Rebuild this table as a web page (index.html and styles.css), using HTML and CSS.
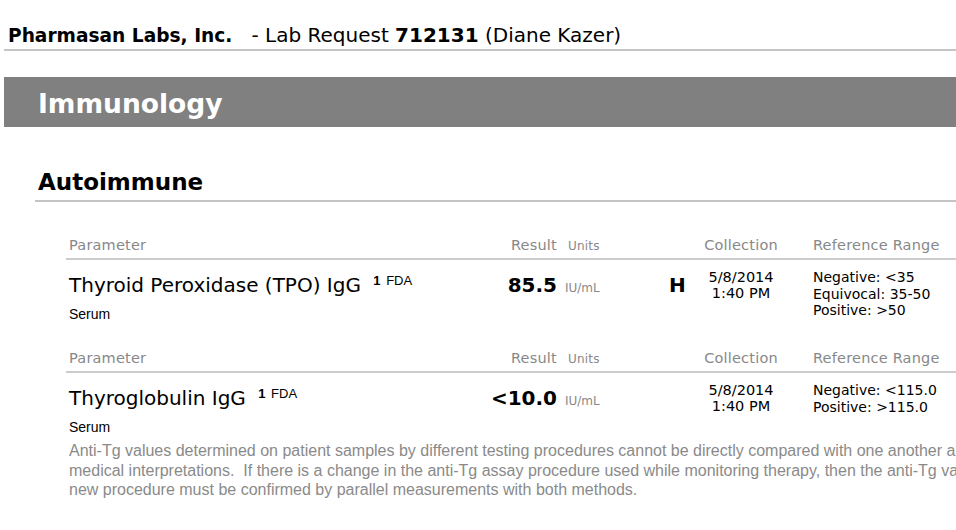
FILE: index.html
```html
<!DOCTYPE html>
<html lang="en">
<head>
<meta charset="utf-8">
<title>Lab Request 712131</title>
<link rel="stylesheet" href="styles.css">
</head>
<body>
<div class="page">
  <header class="top">
    <b class="lab">Pharmasan Labs, Inc.</b>&nbsp;&nbsp; - Lab Request <b>712131</b> (Diane Kazer)
  </header>

  <h1 class="section">Immunology</h1>

  <h2 class="group">Autoimmune</h2>

  <div class="test">
    <div class="cell hd c-param">Parameter</div>
    <div class="cell hd c-result">Result</div>
    <div class="cell hd c-units">Units</div>
    <div class="cell hd c-flag"></div>
    <div class="cell hd c-coll">Collection</div>
    <div class="cell hd c-ref">Reference Range</div>

    <div class="cell c-param">
      <div class="name">Thyroid Peroxidase (TPO) IgG <sup class="mark"><b>1</b> FDA</sup></div>
      <div class="specimen">Serum</div>
    </div>
    <div class="cell c-result val">85.5</div>
    <div class="cell c-units unit">IU/mL</div>
    <div class="cell c-flag flag">H</div>
    <div class="cell c-coll date">5/8/2014<br>1:40 PM</div>
    <div class="cell c-ref range">Negative: &lt;35<br>Equivocal: 35-50<br>Positive: &gt;50</div>
  </div>

  <div class="test">
    <div class="cell hd c-param">Parameter</div>
    <div class="cell hd c-result">Result</div>
    <div class="cell hd c-units">Units</div>
    <div class="cell hd c-flag"></div>
    <div class="cell hd c-coll">Collection</div>
    <div class="cell hd c-ref">Reference Range</div>

    <div class="cell c-param">
      <div class="name">Thyroglobulin IgG <sup class="mark"><b>1</b> FDA</sup></div>
      <div class="specimen">Serum</div>
    </div>
    <div class="cell c-result val">&lt;10.0</div>
    <div class="cell c-units unit">IU/mL</div>
    <div class="cell c-flag flag"></div>
    <div class="cell c-coll date">5/8/2014<br>1:40 PM</div>
    <div class="cell c-ref range">Negative: &lt;115.0<br>Positive: &gt;115.0</div>

    <p class="note">Anti-Tg values determined on patient samples by different testing procedures cannot be directly compared with one another and could be the cause of erroneous<br>medical interpretations.&nbsp; If there is a change in the anti-Tg assay procedure used while monitoring therapy, then the anti-Tg values obtained upon changing over to the<br>new procedure must be confirmed by parallel measurements with both methods.</p>
  </div>
</div>
</body>
</html>
```

FILE: styles.css
```css
html, body {
  margin: 0;
  padding: 0;
  overflow: hidden;
  background: #fff;
}

body {
  font-family: "DejaVu Sans", Verdana, sans-serif;
  color: #000;
}

.page {
  width: 1200px;
}

.top {
  margin: 0 0 0 4px;
  padding: 24px 0 3px 4px;
  height: 22px;
  font-size: 20px;
  line-height: 22px;
  border-bottom: 2px solid #c4c4c4;
  white-space: nowrap;
}

.top .lab {
  font-size: 18.6px;
}

.section {
  margin: 26px 0 0 4px;
  padding: 4px 0 0 34px;
  height: 46px;
  line-height: 46px;
  background: #808080;
  color: #fff;
  font-size: 26.5px;
  font-weight: bold;
}

.group {
  margin: 41px 0 0 35px;
  padding: 0 0 4px 3px;
  font-size: 23px;
  line-height: 28px;
  font-weight: bold;
  border-bottom: 2px solid #c4c4c4;
}

.test {
  margin-left: 66px;
  margin-top: 33px;
  display: grid;
  grid-template-columns: 414px 80px 100px 40px 82px 1fr;
  align-items: start;
}

.test + .test {
  margin-top: 26px;
}

.cell.hd {
  color: #888;
  font-size: 14.5px;
  line-height: 20px;
  padding-bottom: 3px;
  border-bottom: 2px solid #cccccc;
  margin-bottom: 9px;
  align-self: stretch;
  letter-spacing: 0.2px;
}

.c-param { padding-left: 3px; }
.c-result { text-align: right; padding-right: 3px; }
.c-units { padding-left: 5px; }
.c-flag { padding-left: 9px; }
.c-coll { text-align: center; }
.c-ref { padding-left: 31px; white-space: nowrap; }

.cell.hd.c-units {
  font-size: 12px;
  padding-left: 8px;
  padding-top: 2px;
  line-height: 18px;
}

.name {
  padding-top: 4px;
  font-size: 20px;
  line-height: 24px;
  white-space: nowrap;
}

.mark {
  font-family: "Liberation Sans", Arial, sans-serif;
  font-size: 13px;
  line-height: 0;
  vertical-align: 7px;
  margin-left: 6px;
}

.mark b {
  font-size: 13px;
  margin-right: 2px;
}

.specimen {
  margin-top: 9px;
  font-family: "Liberation Sans", Arial, sans-serif;
  font-size: 14px;
  line-height: 16px;
}

.val {
  padding-top: 4px;
  font-size: 20px;
  line-height: 24px;
  font-weight: bold;
}

.unit {
  padding-top: 10px;
  font-size: 12px;
  line-height: 18px;
  color: #888;
}

.flag {
  padding-top: 4px;
  font-size: 20px;
  line-height: 24px;
  font-weight: bold;
}

.date {
  font-size: 14.5px;
  line-height: 16px;
}

.range {
  font-size: 14px;
  line-height: 16.5px;
}

.note {
  grid-column: 1 / -1;
  margin: 6px 0 0;
  padding-left: 3px;
  font-family: "Liberation Sans", Arial, sans-serif;
  font-size: 16px;
  line-height: 19.5px;
  color: #8a8a8a;
  white-space: nowrap;
}
```
